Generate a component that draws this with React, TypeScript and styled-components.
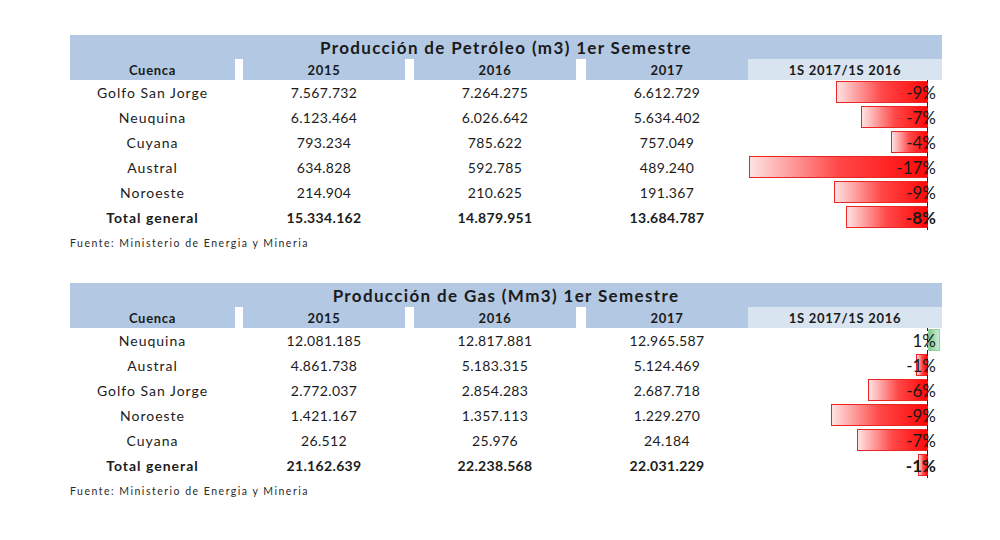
import React from "react";
import styled, { createGlobalStyle, css } from "styled-components";

const Global = createGlobalStyle`
  html, body { margin: 0; padding: 0; background: #ffffff; }
  body { font-family: Lato, "Open Sans", "Liberation Sans", sans-serif; color: #1c1c1c; }
`;

const Page = styled.div`
  width: 1000px;
  height: 540px;
  box-sizing: border-box;
  padding: 35px 0 0 70px;
  display: flex;
  flex-direction: column;
  gap: 28px;
`;

const Table = styled.section`
  width: 872px;
  display: flex;
  flex-direction: column;
`;

const Title = styled.div`
  height: 24px;
  background: #b3c8e2;
  display: flex;
  align-items: center;
  justify-content: center;
  font-size: 17px;
  font-weight: 700;
  color: #1a1a1a;
  letter-spacing: 1.35px;
`;

const cols = "165px 8px 162px 9px 162px 10px 162px 194px";

const HeadRow = styled.div`
  display: grid;
  grid-template-columns: ${cols};
  height: 21px;
`;

const HeadCell = styled.div<{ $tone?: "main" | "light" | "gap" }>`
  display: flex;
  align-items: center;
  justify-content: center;
  font-size: 13px;
  font-weight: 700;
  letter-spacing: 0.7px;
  color: #1a1a1a;
  background: ${(p) =>
    p.$tone === "gap" ? "#ffffff" : p.$tone === "light" ? "#d9e4f1" : "#b3c8e2"};
`;

const Row = styled.div`
  display: grid;
  grid-template-columns: ${cols};
  height: 25px;
`;

const Cell = styled.div<{ $bold?: boolean; $num?: boolean }>`
  display: flex;
  align-items: center;
  justify-content: center;
  font-size: 14px;
  letter-spacing: ${(p) => (p.$num ? "0.35px" : "1px")};
  font-weight: ${(p) => (p.$bold ? 700 : 400)};
  color: #1c1c1c;
`;

const Spacer = styled.div``;

const BarCell = styled.div<{ $bold?: boolean }>`
  position: relative;
  display: flex;
  align-items: center;
  justify-content: flex-end;
  padding-right: 6px;
  font-size: 17px;
  font-weight: ${(p) => (p.$bold ? 700 : 400)};
  color: #1a1a1a;
`;

const Axis = styled.div`
  position: absolute;
  top: 0;
  bottom: 0;
  right: 14px;
  border-left: 1px dashed #222;
`;

const Bar = styled.div<{ $pos: boolean }>`
  position: absolute;
  top: 1px;
  bottom: 2px;
  box-sizing: border-box;
  ${(p) =>
    p.$pos
      ? css`
          left: 180px;
          background: linear-gradient(to right, #7fcb8f, #c9ebd0);
          border: 1px solid #8fd19d;
        `
      : css`
          right: 14px;
          background: linear-gradient(to right, #fde3e3 0%, #ff4848 50%, #ff0808 100%);
          border: 1px solid #ec2424;
        `}
`;

const PctText = styled.span`
  position: relative;
  z-index: 1;
`;

const Source = styled.div`
  height: 25px;
  display: flex;
  align-items: center;
  font-size: 10.5px;
  letter-spacing: 1.5px;
  color: #2a2a2a;
`;

type DataRow = { name: string; a: string; b: string; c: string; pct: number; total?: boolean };

const SCALE = 10.25;

function PctBar({ pct, bold }: { pct: number; bold?: boolean }) {
  const w = Math.abs(pct) * SCALE;
  const label = `${Math.round(pct)}%`;
  return (
    <BarCell $bold={bold}>
      <Bar $pos={pct > 0} style={{ width: `${w}px` }} />
      <Axis />
      <PctText>{label}</PctText>
    </BarCell>
  );
}

function DataTable({ title, rows }: { title: string; rows: DataRow[] }) {
  return (
    <Table>
      <Title>{title}</Title>
      <HeadRow>
        <HeadCell>Cuenca</HeadCell>
        <HeadCell $tone="gap" />
        <HeadCell>2015</HeadCell>
        <HeadCell $tone="gap" />
        <HeadCell>2016</HeadCell>
        <HeadCell $tone="gap" />
        <HeadCell>2017</HeadCell>
        <HeadCell $tone="light">1S 2017/1S 2016</HeadCell>
      </HeadRow>
      {rows.map((r) => (
        <Row key={r.name}>
          <Cell $bold={r.total}>{r.name}</Cell>
          <Spacer />
          <Cell $num $bold={r.total}>{r.a}</Cell>
          <Spacer />
          <Cell $num $bold={r.total}>{r.b}</Cell>
          <Spacer />
          <Cell $num $bold={r.total}>{r.c}</Cell>
          <PctBar pct={r.pct} bold={r.total} />
        </Row>
      ))}
      <Source>Fuente: Ministerio de Energia y Mineria</Source>
    </Table>
  );
}

const oil: DataRow[] = [
  { name: "Golfo San Jorge", a: "7.567.732", b: "7.264.275", c: "6.612.729", pct: -8.97 },
  { name: "Neuquina", a: "6.123.464", b: "6.026.642", c: "5.634.402", pct: -6.51 },
  { name: "Cuyana", a: "793.234", b: "785.622", c: "757.049", pct: -3.64 },
  { name: "Austral", a: "634.828", b: "592.785", c: "489.240", pct: -17.47 },
  { name: "Noroeste", a: "214.904", b: "210.625", c: "191.367", pct: -9.14 },
  { name: "Total general", a: "15.334.162", b: "14.879.951", c: "13.684.787", pct: -8.03, total: true },
];

const gas: DataRow[] = [
  { name: "Neuquina", a: "12.081.185", b: "12.817.881", c: "12.965.587", pct: 1.15 },
  { name: "Austral", a: "4.861.738", b: "5.183.315", c: "5.124.469", pct: -1.14 },
  { name: "Golfo San Jorge", a: "2.772.037", b: "2.854.283", c: "2.687.718", pct: -5.84 },
  { name: "Noroeste", a: "1.421.167", b: "1.357.113", c: "1.229.270", pct: -9.42 },
  { name: "Cuyana", a: "26.512", b: "25.976", c: "24.184", pct: -6.9 },
  { name: "Total general", a: "21.162.639", b: "22.238.568", c: "22.031.229", pct: -0.93, total: true },
];

export default function App() {
  return (
    <>
      <Global />
      <Page>
        <DataTable title="Producción de Petróleo (m3) 1er Semestre" rows={oil} />
        <DataTable title="Producción de Gas (Mm3) 1er Semestre" rows={gas} />
      </Page>
    </>
  );
}
